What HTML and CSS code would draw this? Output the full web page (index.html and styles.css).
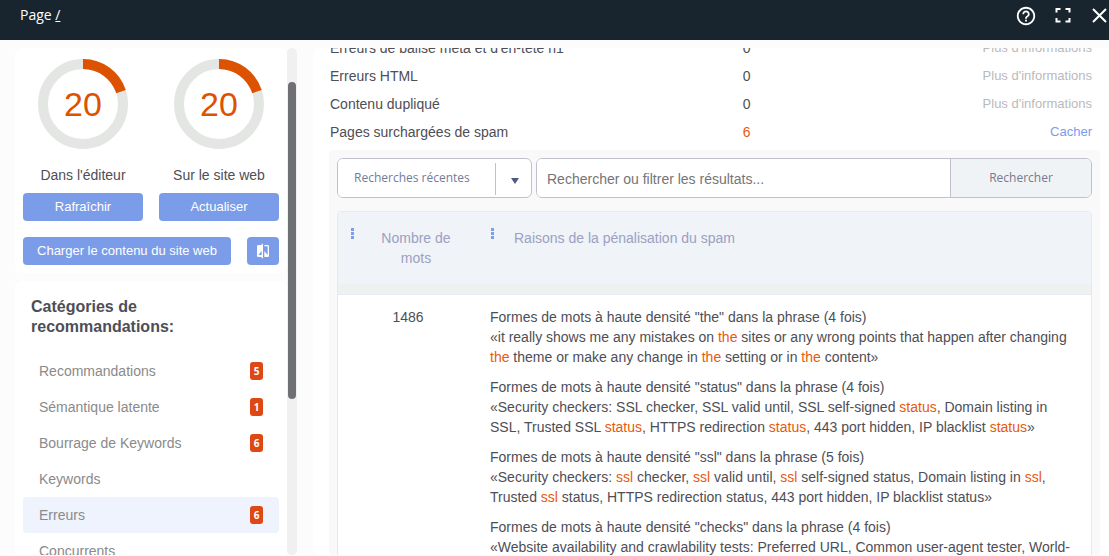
FILE: index.html
```html
<!DOCTYPE html>
<html lang="fr">
<head>
<meta charset="utf-8">
<title>Page /</title>
<link rel="stylesheet" href="styles.css">
</head>
<body>
<header class="topbar">
  <div class="crumb">Page <a href="#">/</a></div>
  <div class="tools">
    <button class="tool" aria-label="Aide"><svg width="22" height="22" viewBox="0 0 24 24" fill="#fff"><path d="M11 18h2v-2h-2v2zm1-16C6.480 2 2 6.480 2 12s4.480 10 10 10 10-4.480 10-10S17.520 2 12 2zm0 18c-4.410 0-8-3.590-8-8s3.590-8 8-8 8 3.590 8 8-3.590 8-8 8zm0-14c-2.210 0-4 1.790-4 4h2c0-1.100.9-2 2-2s2 .9 2 2c0 2-3 1.750-3 5h2c0-2.250 3-2.500 3-5 0-2.210-1.790-4-4-4z"/></svg></button>
    <button class="tool" aria-label="Plein écran"><svg width="16" height="16" viewBox="0 0 16 16" fill="none" stroke="#fff" stroke-width="2"><path d="M1.500 5.500V2h4M10.500 2h4v3.500M14.500 11v3.500h-4M5.500 14.500h-4V11"/></svg></button>
    <button class="tool" aria-label="Fermer"><svg width="16" height="16" viewBox="0 0 16 16" fill="none" stroke="#fff" stroke-width="2"><path d="M2 2l13 13M15 2L2 15"/></svg></button>
  </div>
</header>

<div class="layout">
  <aside class="sidebar">
    <div class="cards">
      <section class="card scores">
        <div class="score">
          <svg class="ring" viewBox="0 0 90 90"><circle cx="45" cy="45" r="40" fill="none" stroke="#e4e6e4" stroke-width="10"/><path d="M45 5A40 40 0 0 1 83 32.600" fill="none" stroke="#dd5200" stroke-width="10"/><text x="45" y="57" text-anchor="middle" class="ring-value">20</text></svg>
          <div class="score-label">Dans l'éditeur</div>
          <button class="btn">Rafraîchir</button>
        </div>
        <div class="score">
          <svg class="ring" viewBox="0 0 90 90"><circle cx="45" cy="45" r="40" fill="none" stroke="#e4e6e4" stroke-width="10"/><path d="M45 5A40 40 0 0 1 83 32.600" fill="none" stroke="#dd5200" stroke-width="10"/><text x="45" y="57" text-anchor="middle" class="ring-value">20</text></svg>
          <div class="score-label">Sur le site web</div>
          <button class="btn">Actualiser</button>
        </div>
        <div class="load-row">
          <button class="btn load">Charger le contenu du site web</button>
          <button class="btn compare" aria-label="Comparer"><svg width="16" height="16" viewBox="0 0 24 24" fill="#fff"><path d="M10 3H5c-1.100 0-2 .9-2 2v14c0 1.100.9 2 2 2h5v2h2V1h-2v2zm0 15H5l5-6v6zm9-15h-5v2h5v13l-5-6v9h5c1.100 0 2-.9 2-2V5c0-1.100-.9-2-2-2z"/></svg></button>
        </div>
      </section>
      <nav class="card categories">
        <h2 class="title">Catégories de recommandations:</h2>
        <a class="item" href="#">Recommandations<span class="badge">5</span></a>
        <a class="item" href="#">Sémantique latente<span class="badge">1</span></a>
        <a class="item" href="#">Bourrage de Keywords<span class="badge">6</span></a>
        <a class="item" href="#">Keywords</a>
        <a class="item active" href="#">Erreurs<span class="badge">6</span></a>
        <a class="item" href="#">Concurrents</a>
      </nav>
    </div>
    <div class="track"><div class="thumb"></div></div>
  </aside>

  <main class="panel">
    <div class="checks">
      <div class="check"><span>Erreurs de balise méta et d'en-tête h1</span><span>0</span><a class="more" href="#">Plus d'informations</a></div>
      <div class="check"><span>Erreurs HTML</span><span>0</span><a class="more" href="#">Plus d'informations</a></div>
      <div class="check"><span>Contenu dupliqué</span><span>0</span><a class="more" href="#">Plus d'informations</a></div>
      <div class="check"><span>Pages surchargées de spam</span><span class="hit">6</span><a class="more open" href="#">Cacher</a></div>
    </div>
    <section class="results">
      <div class="search">
        <div class="recent">
          <select class="recent-select" aria-label="Recherches récentes"><option>Recherches récentes</option></select>
          <span class="caret"><svg width="8" height="6" viewBox="0 0 8 6" fill="#4d5b80"><path d="M0 0h8L4 6z"/></svg></span>
        </div>
        <div class="query">
          <input class="query-input" type="text" aria-label="Rechercher" placeholder="Rechercher ou filtrer les résultats...">
          <button class="query-btn">Rechercher</button>
        </div>
      </div>
      <div class="table-frame">
        <table class="table">
          <thead>
            <tr>
              <th class="count"><div class="head"><svg class="dots" viewBox="0 0 5 12" fill="#7d9fe8"><path d="M1 0h3v3H1zM1 4h3v3H1zM1 8h3v3H1z"/></svg><span class="head-count">Nombre de mots</span></div></th>
              <th><div class="head"><svg class="dots" viewBox="0 0 5 12" fill="#7d9fe8"><path d="M1 0h3v3H1zM1 4h3v3H1zM1 8h3v3H1z"/></svg><span>Raisons de la pénalisation du spam</span></div></th>
            </tr>
          </thead>
          <tbody>
            <tr>
              <td class="count">1486</td>
              <td>
                <p class="reason">Formes de mots à haute densité "the" dans la phrase (4 fois)<br>«it really shows me any mistakes on <em>the</em> sites or any wrong points that happen after changing <em>the</em> theme or make any change in <em>the</em> setting or in <em>the</em> content»</p>
                <p class="reason">Formes de mots à haute densité "status" dans la phrase (4 fois)<br>«Security checkers: SSL checker, SSL valid until, SSL self-signed <em>status</em>, Domain listing in SSL, Trusted SSL <em>status</em>, HTTPS redirection <em>status</em>, 443 port hidden, IP blacklist <em>status</em>»</p>
                <p class="reason">Formes de mots à haute densité "ssl" dans la phrase (5 fois)<br>«Security checkers: <em>ssl</em> checker, <em>ssl</em> valid until, <em>ssl</em> self-signed status, Domain listing in <em>ssl</em>, Trusted <em>ssl</em> status, HTTPS redirection status, 443 port hidden, IP blacklist status»</p>
                <p class="reason">Formes de mots à haute densité "checks" dans la phrase (4 fois)<br>«Website availability and crawlability tests: Preferred URL, Common user-agent tester, World-</p>
              </td>
            </tr>
          </tbody>
        </table>
      </div>
    </section>
  </main>
</div>
</body>
</html>
```

FILE: styles.css
```css
* { box-sizing: border-box; }

body {
  margin: 0;
  height: 100vh;
  display: flex;
  flex-direction: column;
  overflow: hidden;
  background: #fcfcfc;
  color: #4e4e55;
  font: 14px/20px "Liberation Sans", Arial, sans-serif;
}

button, input, select { font: inherit; }
button { border: 0; padding: 0; cursor: pointer; }
a { color: inherit; text-decoration: none; }

.topbar {
  flex: none;
  display: flex;
  justify-content: space-between;
  align-items: center;
  padding: 0 2px 10px 20px;
  height: 40px;
  background: #18252e;
  color: #fff;
  font-family: "Open Sans", "Noto Sans", sans-serif;
}
.crumb a { text-decoration: underline; }
.tools { display: flex; align-items: center; gap: 18px; }
.tool { display: flex; background: none; }
.tool:first-child { padding-top: 2px; }
.tool:last-child { margin-left: 2px; }

.layout {
  flex: 1;
  min-height: 0;
  display: flex;
  gap: 16px;
  padding: 8px 0 1px 15px;
}

.sidebar { flex: none; width: 282px; display: flex; }
.cards { flex: 1; display: flex; flex-direction: column; gap: 8px; overflow: hidden; }
.card { flex: none; background: #fff; border-radius: 8px; padding: 8px; }
.scores {
  display: grid;
  grid-template-columns: 1fr 1fr;
  gap: 16px;
  padding-top: 11px;
}
.score { display: flex; flex-direction: column; align-items: center; }
.ring { width: 90px; height: 90px; }
.ring-value { font-size: 34px; fill: #dd5200; }
.score-label { margin: 16px 0 8px; }
.btn {
  display: flex;
  align-items: center;
  justify-content: center;
  width: 100%;
  height: 28px;
  border-radius: 4px;
  background: #7b9ce8;
  color: #fff;
  font-size: 13px;
}
.load-row { grid-column: 1 / -1; display: flex; gap: 16px; }
.load { flex: 1; }
.compare { width: 32px; }

.title { margin: 0 0 16px; padding: 8px 8px 0; font-size: 16px; line-height: 20px; }
.item {
  display: flex;
  align-items: center;
  justify-content: space-between;
  height: 36px;
  padding: 0 16px;
  border-radius: 4px;
  color: #8a8a8a;
}
.active { background: #eff3fd; }
.badge {
  width: 13px;
  border-radius: 3px;
  background: #dd4814;
  color: #fff;
  font: bold 10px/18px "Open Sans", "Noto Sans", sans-serif;
  text-align: center;
}

.track { width: 10px; padding: 34px 1px 0; border-radius: 5px; background: #f0f0f0; }
.thumb { height: 67%; border-radius: 4px; background: #6e7074; }

.panel {
  flex: 1;
  min-width: 0;
  overflow: hidden;
  padding: 0 9px 0 16px;
  border-radius: 8px 0 0 8px;
  background: #fff;
}
/* The list is shown partly scrolled. */
.checks { margin-top: -14px; padding: 0 8px 4px 1px; }
.check {
  display: grid;
  grid-template-columns: minmax(0, 13fr) minmax(0, 7fr) minmax(0, 4fr);
  line-height: 28px;
  white-space: nowrap;
}
.more { grid-column: 3; justify-self: end; color: #bababa; font-size: 13px; }
.open { color: #7b9ce8; }
.hit { color: #e8590c; }

.results { padding: 8px; border-radius: 4px; background: #f9f9f9; }
.search { display: flex; gap: 4px; height: 40px; margin-bottom: 13px; }
.recent, .query { display: flex; border: 1px solid #c1c1cd; border-radius: 6px; background: #fff; overflow: hidden; }
.recent { width: 195px; }
.recent-select {
  appearance: none;
  flex: 1;
  min-width: 0;
  border: 0;
  padding: 0 0 0 16px;
  background: #fff;
  color: #717c9b;
  font: 12px/20px "Open Sans", "Noto Sans", sans-serif;
}
.caret {
  display: flex;
  align-items: center;
  justify-content: center;
  width: 36px;
  margin: 4px 0 2px;
  padding: 4px 0 0 2px;
  border-left: 1px solid #c1c1cd;
}
.query { flex: 1; }
.query-input { flex: 1; min-width: 0; border: 0; padding: 2px 10px 0; color: #4e4e55; }
.query-input::placeholder { color: #757575; }
.query-btn {
  width: 141px;
  border-left: 1px solid #c1c1cd;
  background: #f0f3f6;
  color: #77798f;
  font: 12px/20px "Open Sans", "Noto Sans", sans-serif;
}

.table-frame { border: 1px solid #e4e9f2; border-radius: 4px; background: #fff; overflow: hidden; }
.table { width: 100%; border-collapse: collapse; table-layout: fixed; }
.table th {
  height: 82px;
  padding: 16px 12px;
  border-bottom: 1px solid #e4e9f2;
  background: linear-gradient(to top, #eff0f0 10px, #f0f3f7 10px);
  color: #9ba1c2;
  font-weight: normal;
  text-align: left;
  vertical-align: top;
}
.table td { padding: 12px 12px 2px; vertical-align: top; }
.table .count { width: 140px; text-align: center; }
.head { display: flex; gap: 19px; }
.head-count { width: 84px; }
.dots { flex: none; width: 5px; height: 12px; }
.reason { margin: 0 0 10px; }
.reason em { font-style: normal; color: #e8590c; }
```
